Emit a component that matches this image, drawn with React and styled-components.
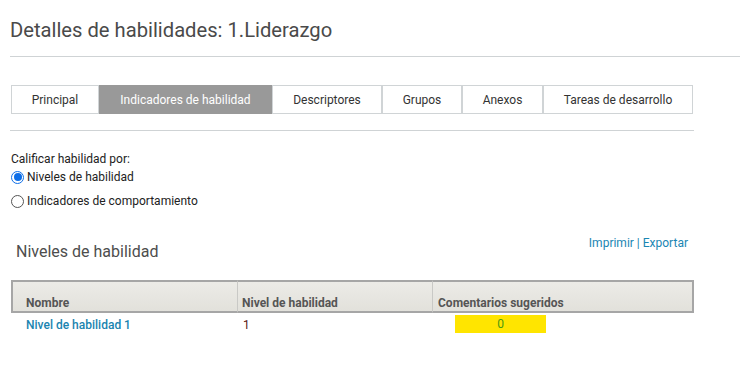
import React from "react";
import styled, { createGlobalStyle } from "styled-components";

const GlobalStyle = createGlobalStyle`
  body {
    margin: 0;
    padding: 0;
    background: #fff;
    font-family: Roboto, "Liberation Sans", sans-serif;
  }
`;

const Page = styled.div`
  padding: 17px 0 0 10px;
`;

const Title = styled.h1`
  margin: 0;
  font-size: 20.2px;
  font-weight: 400;
  color: #4a4a4a;
  line-height: 26px;
`;

const Rule = styled.div`
  height: 1px;
  background: #cfd3d5;
  width: ${p => p.w || "auto"};
  margin-top: ${p => p.top}px;
`;

const Tabs = styled.div`
  display: flex;
  margin: 28px 0 0 1px;
  width: 682px;
`;

const Tab = styled.div`
  flex: 0 0 ${p => p.w}px;
  box-sizing: border-box;
  height: 29px;
  border: 1px solid ${p => (p.active ? "#999" : "#d0d4d6")};
  background: ${p => (p.active ? "#999" : "#fff")};
  color: ${p => (p.active ? "#fff" : "#333")};
  font-size: 12px;
  display: flex;
  align-items: center;
  justify-content: center;
`;

const Section = styled.div`
  margin-top: 20px;
  font-size: 12px;
  color: #222;
`;

const Label = styled.div`
  line-height: 16px;
  margin-left: 1px;
`;

const Option = styled.label`
  display: flex;
  align-items: center;
  height: 16px;
  margin-top: ${p => p.top}px;
`;

const Radio = styled.span`
  width: 13px;
  height: 13px;
  border-radius: 50%;
  box-sizing: border-box;
  border: 1px solid ${p => (p.checked ? "#0f6fe8" : "#555")};
  margin: 0 3px 0 1px;
  display: flex;
  align-items: center;
  justify-content: center;
  &::after {
    content: "";
    width: 8px;
    height: 8px;
    border-radius: 50%;
    background: ${p => (p.checked ? "#0f6fe8" : "transparent")};
  }
`;

const HeadRow = styled.div`
  display: flex;
  justify-content: space-between;
  align-items: flex-start;
  width: 678px;
  margin-top: 27px;
`;

const SubTitle = styled.h2`
  margin: 6px 0 0 6px;
  font-size: 16px;
  font-weight: 400;
  color: #4d4d4d;
  line-height: 20px;
`;

const Links = styled.div`
  font-size: 12px;
  color: #1a86b3;
  line-height: 14px;
`;

const Table = styled.div`
  margin: 18px 0 0 1px;
  width: 683px;
`;

const Row = styled.div`
  display: grid;
  grid-template-columns: 226px 195px 262px;
`;

const HeadCell = styled.div`
  box-sizing: border-box;
  height: 33px;
  background: linear-gradient(#ecebe7, #e2e1db);
  border-top: 2px solid #a6a6a6;
  border-bottom: 2px solid #a6a6a6;
  border-left: ${p => (p.first ? "2px solid #a6a6a6" : "1px solid #c9c9c6")};
  border-right: ${p => (p.last ? "2px solid #a6a6a6" : "none")};
  padding: 0 0 1px ${p => p.pad}px;
  display: flex;
  align-items: flex-end;
  font-size: 12px;
  font-weight: 700;
  color: #555;
`;

const Cell = styled.div`
  padding: 4px 0 0 ${p => p.pad}px;
  font-size: 12px;
  line-height: 16px;
`;

const LinkText = styled.span`
  color: #1a84b0;
  font-weight: 500;
`;

const Value = styled.span`
  color: #5a1414;
`;

const Badge = styled.div`
  width: 91px;
  height: 18px;
  margin-top: -2px;
  background: #ffe500;
  color: #4a9a10;
  display: flex;
  align-items: center;
  justify-content: center;
  font-size: 12px;
`;

const tabs = [
  ["Principal", 88],
  ["Indicadores de habilidad", 173],
  ["Descriptores", 110],
  ["Grupos", 80],
  ["Anexos", 81],
  ["Tareas de desarrollo", 150],
];

export default function App() {
  return (
    <React.Fragment>
      <GlobalStyle />
      <Page>
        <Title>Detalles de habilidades: 1.Liderazgo</Title>
        <Rule top={13} />
        <Tabs>
          {tabs.map(([t, w], i) => (
            <Tab key={t} w={w} active={i === 1}>
              {t}
            </Tab>
          ))}
        </Tabs>
        <Rule top={16} w="684px" />
        <Section>
          <Label>Calificar habilidad por:</Label>
          <Option top={2}>
            <Radio checked />
            Niveles de habilidad
          </Option>
          <Option top={8}>
            <Radio />
            Indicadores de comportamiento
          </Option>
        </Section>
        <HeadRow>
          <SubTitle>Niveles de habilidad</SubTitle>
          <Links>Imprimir | Exportar</Links>
        </HeadRow>
        <Table>
          <Row>
            <HeadCell first pad={13}>Nombre</HeadCell>
            <HeadCell pad={4}>Nivel de habilidad</HeadCell>
            <HeadCell last pad={5}>Comentarios sugeridos</HeadCell>
          </Row>
          <Row>
            <Cell pad={15}>
              <LinkText>Nivel de habilidad 1</LinkText>
            </Cell>
            <Cell pad={6}>
              <Value>1</Value>
            </Cell>
            <Cell pad={23}>
              <Badge>0</Badge>
            </Cell>
          </Row>
        </Table>
      </Page>
    </React.Fragment>
  );
}
